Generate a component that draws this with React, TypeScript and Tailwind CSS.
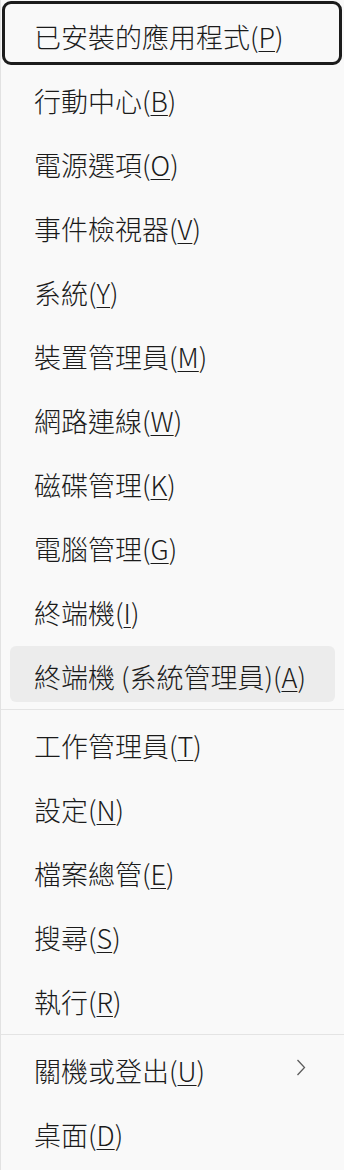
import type { ReactNode } from "react";

type Item = { label: string; key: string; sub?: boolean };

const groups: Item[][] = [
  [
    { label: "已安裝的應用程式", key: "P" },
    { label: "行動中心", key: "B" },
    { label: "電源選項", key: "O" },
    { label: "事件檢視器", key: "V" },
    { label: "系統", key: "Y" },
    { label: "裝置管理員", key: "M" },
    { label: "網路連線", key: "W" },
    { label: "磁碟管理", key: "K" },
    { label: "電腦管理", key: "G" },
    { label: "終端機", key: "I" },
    { label: "終端機 (系統管理員)", key: "A" },
  ],
  [
    { label: "工作管理員", key: "T" },
    { label: "設定", key: "N" },
    { label: "檔案總管", key: "E" },
    { label: "搜尋", key: "S" },
    { label: "執行", key: "R" },
  ],
  [
    { label: "關機或登出", key: "U", sub: true },
    { label: "桌面", key: "D" },
  ],
];

function Chevron() {
  return (
    <svg width="12" height="18" viewBox="0 0 12 18" className="-mt-[1px] text-[#5c5c5c]">
      <path d="M2.5 1 L9.5 8.5 L2.5 16" fill="none" stroke="currentColor" strokeWidth="1.3" />
    </svg>
  );
}

function Row({ item, focused, hovered }: { item: Item; focused?: boolean; hovered?: boolean }) {
  let extra: ReactNode = null;
  if (focused) {
    extra = (
      <span className="pointer-events-none absolute -top-[5px] -bottom-[3px] -left-[8px] -right-[7px] rounded-[9px] border-[3px] border-[#1c1c1c]" />
    );
  }
  return (
    <div className="px-[9px] py-[4px]">
      <div
        className={`relative flex h-[56px] items-center rounded-[6px] pl-[24px] pr-[28px] ${
          hovered ? "bg-[#ececec]" : ""
        }`}
      >
        {extra}
        <span className="flex-1 pt-[4px] text-[27px] font-light leading-none text-[#1b1b1b]">
          {item.label}(<span className="underline decoration-1 underline-offset-[3px]">{item.key}</span>)
        </span>
        {item.sub && <Chevron />}
      </div>
    </div>
  );
}

export default function App() {
  return (
    <div
      className="h-[1170px] w-[344px] overflow-hidden border-l border-[#e2e2e2] bg-[#f9f9f9] pt-[2px]"
      style={{ fontFamily: '"Noto Sans CJK TC", "Noto Sans", sans-serif' }}
    >
      {groups.map((g, gi) => (
        <div key={gi}>
          {gi > 0 && <div className="mb-[1px] mt-[3px] h-px bg-[#e4e4e4]" />}
          {g.map((item, i) => (
            <Row
              key={item.key}
              item={item}
              focused={gi === 0 && i === 0}
              hovered={item.key === "A"}
            />
          ))}
        </div>
      ))}
    </div>
  );
}
